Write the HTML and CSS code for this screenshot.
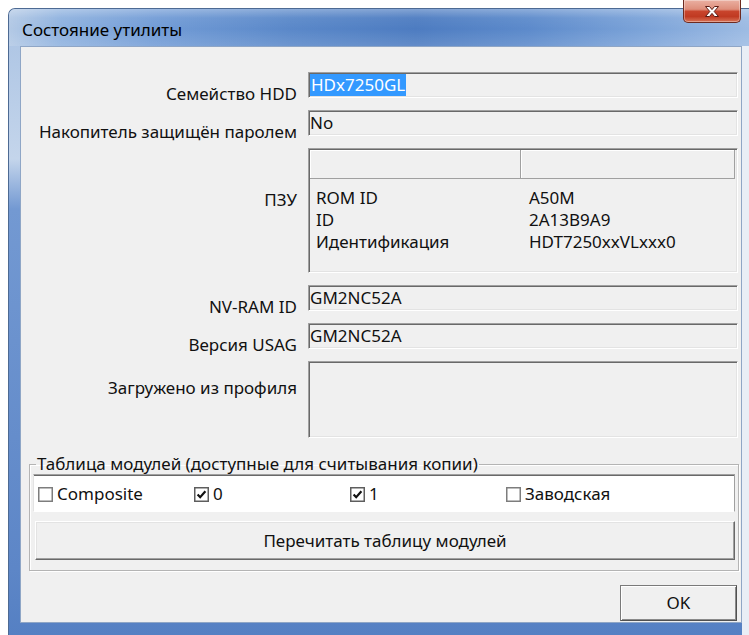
FILE: index.html
```html
<!DOCTYPE html>
<html lang="ru">
<head>
<meta charset="utf-8">
<title>Состояние утилиты</title>
<link rel="stylesheet" href="styles.css">
</head>
<body>
<div class="window">
  <div class="titlebar">
    <span class="title">Состояние утилиты</span>
    <button class="close" type="button" aria-label="Закрыть">
      <svg width="16" height="13" viewBox="0 0 16 13">
        <path d="M1.5 1.5 H5.5 L8 4.6 L10.5 1.5 H14.5 L10.2 6.5 L14.5 11.5 H10.5 L8 8.4 L5.5 11.5 H1.5 L5.8 6.5 Z" fill="#fff" stroke="#5a1a12" stroke-width="1" stroke-linejoin="round"/>
      </svg>
    </button>
  </div>

  <div class="client">
    <div class="form">
      <div class="label">Семейство HDD</div>
      <div class="field"><span class="selected">HDx7250GL</span></div>

      <div class="label">Накопитель защищён паролем</div>
      <div class="field">No</div>

      <div class="label label-rom">ПЗУ</div>
      <div class="listview">
        <div class="lv-header"><span></span><span></span></div>
        <div class="lv-row"><span>ROM ID</span><span>A50M</span></div>
        <div class="lv-row"><span>ID</span><span>2A13B9A9</span></div>
        <div class="lv-row"><span>Идентификация</span><span>HDT7250xxVLxxx0</span></div>
      </div>

      <div class="label">NV-RAM ID</div>
      <div class="field">GM2NC52A</div>

      <div class="label">Версия USAG</div>
      <div class="field">GM2NC52A</div>

      <div class="label label-profile">Загружено из профиля</div>
      <div class="field field-tall"></div>
    </div>

    <fieldset class="group">
      <legend>Таблица модулей (доступные для считывания копии)</legend>
      <div class="modules">
        <label class="check">
          <svg class="box" width="15" height="15" viewBox="0 0 15 15"><rect x="0.75" y="0.75" width="13.5" height="13.5" fill="#fff" stroke="#7d7d7d" stroke-width="1.5"/></svg>
          Composite
        </label>
        <label class="check">
          <svg class="box" width="15" height="15" viewBox="0 0 15 15"><rect x="0.75" y="0.75" width="13.5" height="13.5" fill="#fff" stroke="#5e5e5e" stroke-width="1.5"/><path d="M3.6 7.4 L6.2 10.2 L11.4 4.2" fill="none" stroke="#111" stroke-width="2.2"/></svg>
          0
        </label>
        <label class="check">
          <svg class="box" width="15" height="15" viewBox="0 0 15 15"><rect x="0.75" y="0.75" width="13.5" height="13.5" fill="#fff" stroke="#5e5e5e" stroke-width="1.5"/><path d="M3.6 7.4 L6.2 10.2 L11.4 4.2" fill="none" stroke="#111" stroke-width="2.2"/></svg>
          1
        </label>
        <label class="check">
          <svg class="box" width="15" height="15" viewBox="0 0 15 15"><rect x="0.75" y="0.75" width="13.5" height="13.5" fill="#fff" stroke="#7d7d7d" stroke-width="1.5"/></svg>
          Заводская
        </label>
      </div>
      <button class="btn reread" type="button">Перечитать таблицу модулей</button>
    </fieldset>

    <div class="footer">
      <button class="btn ok" type="button">OK</button>
    </div>
  </div>
</div>
</body>
</html>
```

FILE: styles.css
```css
* {
  box-sizing: border-box;
}

html,
body {
  margin: 0;
  padding: 0;
}

body {
  width: 749px;
  height: 635px;
  overflow: hidden;
  background: #fff;
  font-family: "Noto Sans", "Open Sans", sans-serif;
  font-size: 17px;
  line-height: 22px;
  color: #111;
}

/* Aero-style window frame */
.window {
  position: relative;
  margin: 8px 0 0 8px;
  width: 741px;
  height: 627px;
  padding: 0 7px 12px 11px;
  border: 1px solid #4d6a93;
  border-right: 0;
  border-bottom: 0;
  border-radius: 7px 0 0 0;
  display: flex;
  flex-direction: column;
  background:
    linear-gradient(90deg, transparent calc(100% - 7px), #e9eef6 calc(100% - 7px)),
    linear-gradient(180deg, #a9c2e3 0, #c4d5eb 150px, #7399d2 200px, #5d86c7 560px, #5580c3 100%);
}

.titlebar {
  height: 37px;
  margin: 0 -7px 0 -11px;
  padding: 5px 0 0 13px;
  display: flex;
  align-items: center;
  border-radius: 6px 0 0 0;
  background:
    linear-gradient(180deg, rgba(255, 255, 255, 0.3) 0, rgba(255, 255, 255, 0.05) 9px, rgba(255, 255, 255, 0) 20px, rgba(255, 255, 255, 0.12) 100%),
    linear-gradient(90deg, #b3c9e5 0, #8fb2df 7%, #729cd6 20%, #5a88c9 38%, #4d7cc1 55%, #5c8acb 70%, #7aa2d8 85%, #9dbbe3 100%);
}

.title {
  color: #000;
}

.close {
  position: absolute;
  top: -9px;
  left: 674px;
  width: 58px;
  height: 23px;
  padding: 0;
  border: 1px solid #6d2a20;
  border-top: 0;
  border-radius: 0 0 5px 5px;
  display: flex;
  align-items: center;
  justify-content: center;
  background: linear-gradient(180deg, #eab0a2 0, #de8e7b 42%, #c8442c 52%, #c03a22 75%, #d87357 100%);
  box-shadow: inset 0 0 0 1px rgba(255, 255, 255, 0.35);
}

/* Dialog client area */
.client {
  flex: 1;
  min-height: 0;
  background: #f0f0f0;
  border: 1px solid #8fa6c6;
  display: flex;
  flex-direction: column;
  padding: 25px 0 0 0;
}

.form {
  display: grid;
  grid-template-columns: 276px 430px;
  column-gap: 11px;
  row-gap: 12px;
}

/* Captions sit low beside their edit, without stretching the row */
.label {
  height: 26px;
  text-align: right;
  padding-top: 11px;
  white-space: nowrap;
}

.label-rom {
  height: auto;
  padding-top: 41px;
}

.label-profile {
  height: auto;
  padding-top: 16px;
}

/* Sunken read-only edit */
.field {
  height: 26px;
  padding: 1px 2px 0 1px;
  background: #f0f0f0;
  border: 1px solid;
  border-color: #a0a0a0 #fff #fff #a0a0a0;
  box-shadow: inset 1px 1px 0 #696969, inset -1px -1px 0 #e3e3e3;
  white-space: nowrap;
}

.field-tall {
  height: 77px;
}

.selected {
  display: inline-block;
  background: #3399ff;
  color: #fff;
  padding: 0 1px;
}

.listview {
  height: 125px;
  padding: 1px 2px 0 1px;
  background: #f0f0f0;
  border: 1px solid;
  border-color: #a0a0a0 #fff #fff #a0a0a0;
  box-shadow: inset 1px 1px 0 #696969, inset -1px -1px 0 #e3e3e3;
}

.lv-header {
  display: grid;
  grid-template-columns: 211px 214px;
  height: 29px;
  margin-bottom: 8px;
}

.lv-header span {
  border-right: 1px solid #a0a0a0;
  border-bottom: 1px solid #a0a0a0;
  box-shadow: inset 1px 1px 0 #fff;
}

.lv-row {
  display: grid;
  grid-template-columns: 211px 1fr;
  white-space: nowrap;
}

.lv-row span:first-child {
  padding-left: 6px;
}

.lv-row span:last-child {
  padding-left: 8px;
}

/* Module table group */
.group {
  margin: 16px 0 0 8px;
  width: 710px;
  min-width: 0;
  padding: 0 3px 10px;
  border: 1px solid #b4b4b4;
  box-shadow: inset 1px 1px 0 #fff, 1px 1px 0 #fff;
}

.group legend {
  margin-left: 3px;
  padding: 0 1px;
  line-height: 20px;
}

.modules {
  height: 38px;
  padding: 2px 0 0 4px;
  display: grid;
  grid-template-columns: repeat(4, 156px);
  align-items: center;
  background: #fff;
  border: 1px solid;
  border-color: #a0a0a0 #a0a0a0 #fff #e3e3e3;
  box-shadow: inset 0 1px 0 #696969;
}

.check {
  display: flex;
  align-items: center;
  gap: 4px;
  white-space: nowrap;
}

.box {
  flex: none;
}

/* Raised push buttons */
.btn {
  font: inherit;
  color: #111;
  background: #f0f0f0;
  border: 1px solid;
  border-color: #fff #696969 #696969 #fff;
  box-shadow: inset -1px -1px 0 #a0a0a0, inset 1px 1px 0 #e3e3e3;
  padding: 0;
}

.reread {
  display: block;
  margin: 9px 0 0 2px;
  width: 700px;
  height: 39px;
}

.footer {
  margin-top: 14px;
  display: flex;
  justify-content: flex-end;
  padding-right: 4px;
}

.ok {
  width: 117px;
  height: 36px;
  border-color: #7a7a7a #505050 #505050 #7a7a7a;
  box-shadow: inset 1px 1px 0 #fff, inset -1px -1px 0 #8a8a8a;
}
```
